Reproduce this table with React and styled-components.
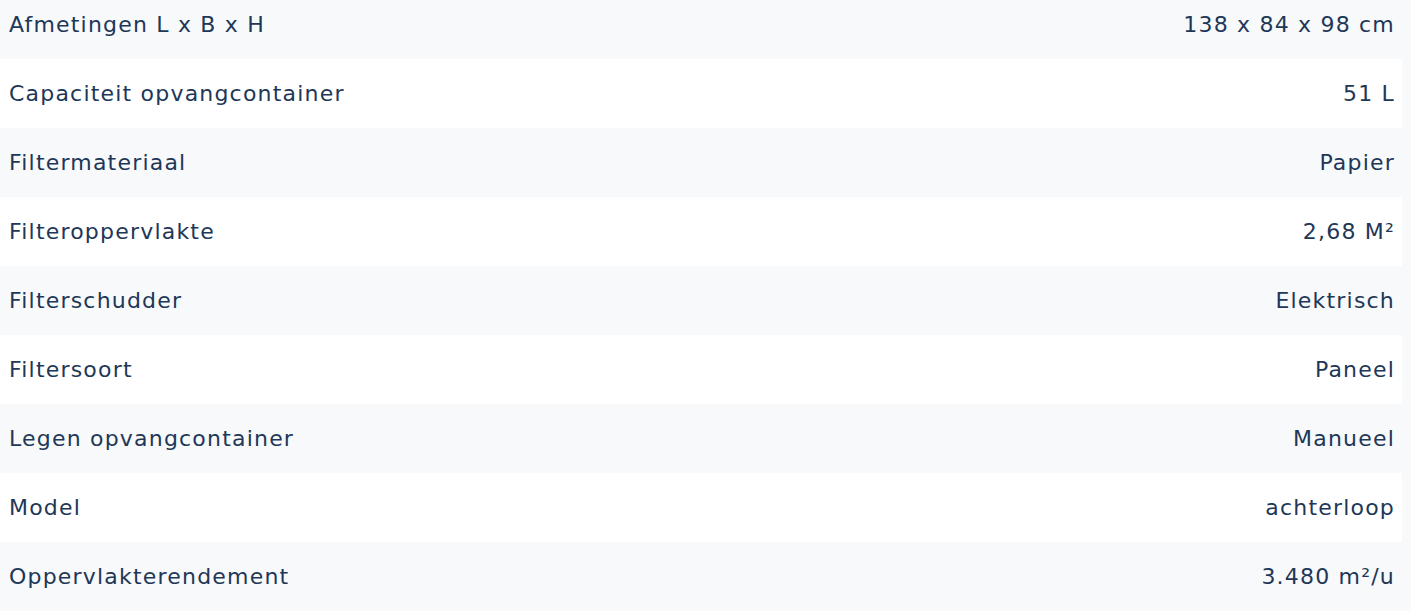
import React from 'react';
import styled, { createGlobalStyle } from 'styled-components';

const GlobalStyle = createGlobalStyle`
  html, body {
    margin: 0;
    padding: 0;
    background: #f8f9fb;
    overflow: hidden;
  }
`;

const specs = [
  { label: 'Afmetingen L x B x H', value: '138 x 84 x 98 cm' },
  { label: 'Capaciteit opvangcontainer', value: '51 L' },
  { label: 'Filtermateriaal', value: 'Papier' },
  { label: 'Filteroppervlakte', value: '2,68 M²' },
  { label: 'Filterschudder', value: 'Elektrisch' },
  { label: 'Filtersoort', value: 'Paneel' },
  { label: 'Legen opvangcontainer', value: 'Manueel' },
  { label: 'Model', value: 'achterloop' },
  { label: 'Oppervlakterendement', value: '3.480 m²/u' },
];

const Table = styled.div`
  width: 1402px;
  margin-top: -10px;
  display: flex;
  flex-direction: column;
  font-family: 'DejaVu Sans', 'Liberation Sans', sans-serif;
  color: #213757;
`;

const Row = styled.div`
  height: 69px;
  display: flex;
  align-items: center;
  justify-content: space-between;
  padding: 0 7px 0 9px;
  box-sizing: border-box;
  background: ${(props) => (props.striped ? '#f8f9fb' : '#ffffff')};
`;

const Cell = styled.span`
  font-size: 22px;
  letter-spacing: 1.2px;
  white-space: nowrap;
`;

const App = () => {
  return (
    <>
      <GlobalStyle />
      <Table>
        {specs.map((s, i) => (
          <Row key={s.label} striped={i % 2 === 0}>
            <Cell>{s.label}</Cell>
            <Cell>{s.value}</Cell>
          </Row>
        ))}
      </Table>
    </>
  );
};

export default App;
